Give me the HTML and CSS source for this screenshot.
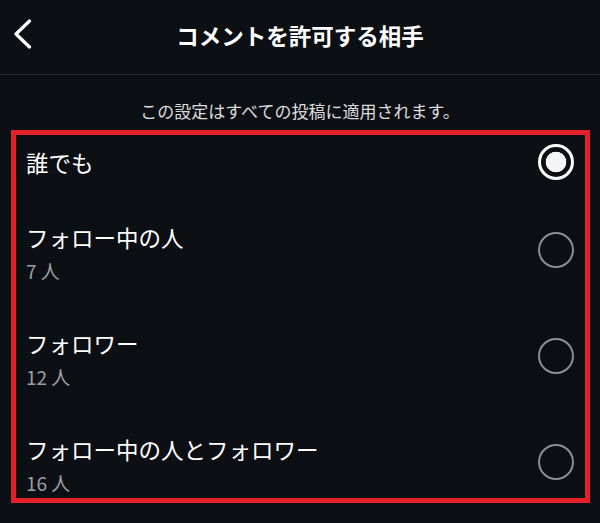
FILE: index.html
```html
<!DOCTYPE html>
<html lang="ja">
<head>
<meta charset="utf-8">
<title>コメントを許可する相手</title>
<link rel="stylesheet" href="styles.css">
</head>
<body>
<div class="screen">
  <header class="header">
    <div class="back">
      <svg class="chevron" width="20" height="30" viewBox="0 0 20 30"><polyline points="16.5,2 3,15 16.5,28" fill="none" stroke="#ffffff" stroke-width="3.2" stroke-linecap="round" stroke-linejoin="round"/></svg>
    </div>
    <h1 class="title">コメントを許可する相手</h1>
    <div class="spacer"></div>
  </header>
  <p class="note">この設定はすべての投稿に適用されます。</p>
  <div class="box">
    <div class="row">
      <div class="text"><div class="label">誰でも</div></div>
      <span class="radio selected"></span>
    </div>
    <div class="row">
      <div class="text"><div class="label">フォロー中の人</div><div class="sub">7 人</div></div>
      <span class="radio"></span>
    </div>
    <div class="row">
      <div class="text"><div class="label">フォロワー</div><div class="sub">12 人</div></div>
      <span class="radio"></span>
    </div>
    <div class="row">
      <div class="text"><div class="label">フォロー中の人とフォロワー</div><div class="sub">16 人</div></div>
      <span class="radio"></span>
    </div>
  </div>
</div>
</body>
</html>
```

FILE: styles.css
```css
html, body {
  margin: 0;
  padding: 0;
  background: #0c0f14;
}
body {
  font-family: "Noto Sans CJK JP", "Noto Sans", sans-serif;
  color: #ffffff;
}
.screen {
  width: 600px;
  height: 523px;
  overflow: hidden;
}
.header {
  height: 74px;
  border-bottom: 1px solid #24272c;
  display: grid;
  grid-template-columns: 1fr auto 1fr;
  align-items: center;
  box-sizing: content-box;
}
.back {
  padding-left: 13px;
  display: flex;
  align-items: center;
  padding-bottom: 6px;
}
.chevron {
  display: block;
}
.title {
  margin: 0;
  font-size: 22.5px;
  font-weight: 700;
  line-height: 30px;
  padding-bottom: 4px;
  letter-spacing: 0;
}
.note {
  margin: 24px 0 0;
  text-align: center;
  font-size: 17px;
  line-height: 24px;
  color: #dcdddf;
}
.box {
  margin: 7px 10px 0 11px;
  height: 373px;
  box-sizing: border-box;
  border: 5px solid #e3202a;
  padding: 12px 11px 0 10px;
  display: flex;
  flex-direction: column;
  gap: 45px;
}
.row {
  display: flex;
  align-items: center;
  justify-content: space-between;
}
.label {
  font-size: 22.5px;
  line-height: 30px;
}
.sub {
  margin-top: 7px;
  font-size: 19px;
  line-height: 24px;
  color: #9c9fa4;
}
.radio {
  width: 36px;
  height: 36px;
  box-sizing: border-box;
  border: 2.5px solid #8b8e93;
  border-radius: 50%;
  flex: none;
  margin: -6px 0 0;
}
.radio.selected {
  border: 3px solid #ffffff;
  background: radial-gradient(circle, #f4f4f4 0 10px, transparent 10.6px);
  margin: -8px 0 -8px;
}
```
